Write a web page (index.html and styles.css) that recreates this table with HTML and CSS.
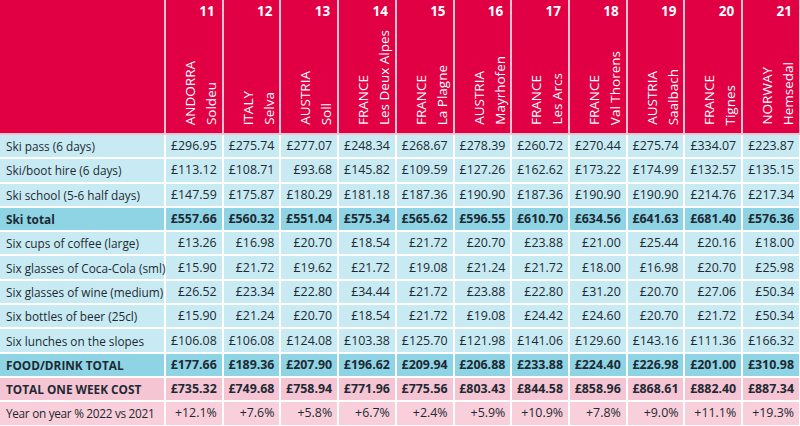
FILE: index.html
```html
<!DOCTYPE html>
<html lang="en">
<head>
<meta charset="utf-8">
<title>Ski resort costs</title>
<link rel="stylesheet" href="styles.css">
</head>
<body>
<table class="costs">
  <colgroup>
    <col class="col-label">
    <col span="11" class="col-val">
  </colgroup>
  <thead>
    <tr>
      <th class="corner"></th>
      <th><div class="hd"><span class="rank">11</span><div class="names"><span class="country">ANDORRA</span><span class="resort">Soldeu</span></div></div></th>
      <th><div class="hd"><span class="rank">12</span><div class="names"><span class="country">ITALY</span><span class="resort">Selva</span></div></div></th>
      <th><div class="hd"><span class="rank">13</span><div class="names"><span class="country">AUSTRIA</span><span class="resort">Soll</span></div></div></th>
      <th><div class="hd"><span class="rank">14</span><div class="names"><span class="country">FRANCE</span><span class="resort">Les Deux Alpes</span></div></div></th>
      <th><div class="hd"><span class="rank">15</span><div class="names"><span class="country">FRANCE</span><span class="resort">La Plagne</span></div></div></th>
      <th><div class="hd"><span class="rank">16</span><div class="names"><span class="country">AUSTRIA</span><span class="resort">Mayrhofen</span></div></div></th>
      <th><div class="hd"><span class="rank">17</span><div class="names"><span class="country">FRANCE</span><span class="resort">Les Arcs</span></div></div></th>
      <th><div class="hd"><span class="rank">18</span><div class="names"><span class="country">FRANCE</span><span class="resort">Val Thorens</span></div></div></th>
      <th><div class="hd"><span class="rank">19</span><div class="names"><span class="country">AUSTRIA</span><span class="resort">Saalbach</span></div></div></th>
      <th><div class="hd"><span class="rank">20</span><div class="names"><span class="country">FRANCE</span><span class="resort">Tignes</span></div></div></th>
      <th><div class="hd"><span class="rank">21</span><div class="names"><span class="country">NORWAY</span><span class="resort">Hemsedal</span></div></div></th>
    </tr>
  </thead>
  <tbody>
    <tr class="row">
      <td>Ski pass (6 days)</td><td>£296.95</td><td>£275.74</td><td>£277.07</td><td>£248.34</td><td>£268.67</td><td>£278.39</td><td>£260.72</td><td>£270.44</td><td>£275.74</td><td>£334.07</td><td>£223.87</td>
    </tr>
    <tr class="row">
      <td>Ski/boot hire (6 days)</td><td>£113.12</td><td>£108.71</td><td>£93.68</td><td>£145.82</td><td>£109.59</td><td>£127.26</td><td>£162.62</td><td>£173.22</td><td>£174.99</td><td>£132.57</td><td>£135.15</td>
    </tr>
    <tr class="row">
      <td>Ski school (5-6 half days)</td><td>£147.59</td><td>£175.87</td><td>£180.29</td><td>£181.18</td><td>£187.36</td><td>£190.90</td><td>£187.36</td><td>£190.90</td><td>£190.90</td><td>£214.76</td><td>£217.34</td>
    </tr>
    <tr class="row sub">
      <td>Ski total</td><td>£557.66</td><td>£560.32</td><td>£551.04</td><td>£575.34</td><td>£565.62</td><td>£596.55</td><td>£610.70</td><td>£634.56</td><td>£641.63</td><td>£681.40</td><td>£576.36</td>
    </tr>
    <tr class="row">
      <td>Six cups of coffee (large)</td><td>£13.26</td><td>£16.98</td><td>£20.70</td><td>£18.54</td><td>£21.72</td><td>£20.70</td><td>£23.88</td><td>£21.00</td><td>£25.44</td><td>£20.16</td><td>£18.00</td>
    </tr>
    <tr class="row">
      <td>Six glasses of Coca-Cola (sml)</td><td>£15.90</td><td>£21.72</td><td>£19.62</td><td>£21.72</td><td>£19.08</td><td>£21.24</td><td>£21.72</td><td>£18.00</td><td>£16.98</td><td>£20.70</td><td>£25.98</td>
    </tr>
    <tr class="row">
      <td>Six glasses of wine (medium)</td><td>£26.52</td><td>£23.34</td><td>£22.80</td><td>£34.44</td><td>£21.72</td><td>£23.88</td><td>£22.80</td><td>£31.20</td><td>£20.70</td><td>£27.06</td><td>£50.34</td>
    </tr>
    <tr class="row">
      <td>Six bottles of beer (25cl)</td><td>£15.90</td><td>£21.24</td><td>£20.70</td><td>£18.54</td><td>£21.72</td><td>£19.08</td><td>£24.42</td><td>£24.60</td><td>£20.70</td><td>£21.72</td><td>£50.34</td>
    </tr>
    <tr class="row">
      <td>Six lunches on the slopes</td><td>£106.08</td><td>£106.08</td><td>£124.08</td><td>£103.38</td><td>£125.70</td><td>£121.98</td><td>£141.06</td><td>£129.60</td><td>£143.16</td><td>£111.36</td><td>£166.32</td>
    </tr>
    <tr class="row sub">
      <td>FOOD/DRINK TOTAL</td><td>£177.66</td><td>£189.36</td><td>£207.90</td><td>£196.62</td><td>£209.94</td><td>£206.88</td><td>£233.88</td><td>£224.40</td><td>£226.98</td><td>£201.00</td><td>£310.98</td>
    </tr>
    <tr class="row total">
      <td>TOTAL ONE WEEK COST</td><td>£735.32</td><td>£749.68</td><td>£758.94</td><td>£771.96</td><td>£775.56</td><td>£803.43</td><td>£844.58</td><td>£858.96</td><td>£868.61</td><td>£882.40</td><td>£887.34</td>
    </tr>
    <tr class="row yoy">
      <td>Year on year % 2022 vs 2021</td><td>+12.1%</td><td>+7.6%</td><td>+5.8%</td><td>+6.7%</td><td>+2.4%</td><td>+5.9%</td><td>+10.9%</td><td>+7.8%</td><td>+9.0%</td><td>+11.1%</td><td>+19.3%</td>
    </tr>
  </tbody>
</table>
</body>
</html>
```

FILE: styles.css
```css
html, body {
  margin: 0;
  padding: 0;
  background: #ffffff;
}

body {
  font-family: "Open Sans", "Noto Sans", "Liberation Sans", sans-serif;
  color: #1e2a33;
  width: 800px;
  height: 426px;
  overflow: hidden;
}

.costs {
  width: 802px;
  margin: -1px 0 0 -1px;
  border-collapse: collapse;
  table-layout: fixed;
  font-size: 12px;
}

.col-label {
  width: 166px;
}

.costs th,
.costs td {
  border: 2px solid #ffffff;
  padding: 0;
}

.costs thead th {
  background: #e00043;
  color: #ffffff;
  height: 134px;
  vertical-align: top;
  border-color: #f6c3d2;
  border-top: 0;
}

.costs thead th.corner {
  border-left: 0;
}

.hd {
  height: 134px;
  display: flex;
  flex-direction: column;
  align-items: stretch;
}

.rank {
  font-weight: 700;
  font-size: 13.5px;
  text-align: right;
  padding: 4px 7px 0 0;
  line-height: 17px;
}

.names {
  flex: 1;
  display: flex;
  flex-direction: row;
  justify-content: flex-start;
  align-items: flex-end;
  padding: 0 0 8px 15px;
  gap: 2px;
}

.country,
.resort {
  writing-mode: vertical-rl;
  transform: rotate(180deg);
  font-size: 13.5px;
  font-weight: 400;
  line-height: 19px;
  white-space: nowrap;
}

.costs tbody td {
  height: 22.3px;
  background: #c8eaf2;
  text-align: right;
  padding: 0 5px 0 0;
  line-height: 22px;
  white-space: nowrap;
  font-size: 12.4px;
}

.costs tbody td:first-child {
  text-align: left;
  padding: 0 0 0 7px;
  border-left: 0;
  font-size: 11.8px;
}

.costs tbody tr.yoy td:first-child {
  letter-spacing: -0.3px;
}

.costs tbody tr:last-child td {
  border-bottom: 0;
}

.costs tbody tr.sub td {
  background: #8ed4e4;
  font-weight: 700;
}

.costs tbody tr.total td {
  background: #f6c5d3;
  font-weight: 700;
}

.costs tbody tr.yoy td {
  background: #f8cfda;
}
```
